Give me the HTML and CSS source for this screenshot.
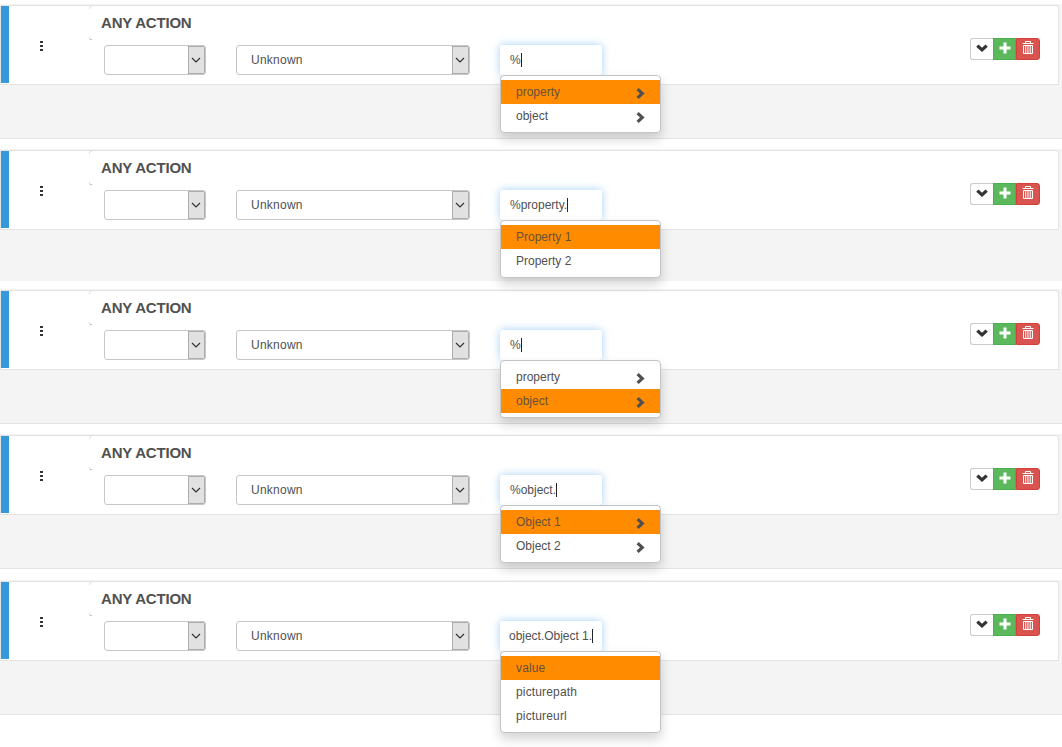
FILE: index.html
```
<!DOCTYPE html>
<html lang="en">
<head>
<meta charset="utf-8">
<title>Any Action</title>
<link rel="stylesheet" href="styles.css">
</head>
<body>
<svg width="0" height="0" class="defs">
  <symbol id="down" viewBox="0 0 12 8"><path d="M.2 2.700 2.500.4 6 3.800 9.500.4l2.300 2.300L6 8z"/></symbol>
  <symbol id="right" viewBox="0 0 9 11"><path d="M2.700 0 8.600 5.500l-5.900 5.500L.5 8.800 4 5.500.5 2.200z"/></symbol>
  <symbol id="plus" viewBox="0 0 12 12"><path d="M4.500 0.500h3v4h4v3h-4v4h-3v-4h-4v-3h4z"/></symbol>
  <symbol id="trash" viewBox="0 0 12 14"><path fill="none" stroke="currentColor" d="M.5 2.500h11M3.500 2V.5h5V2M1.500 4.500v8h9v-8z"/><path fill="none" stroke="currentColor" stroke-width=".8" d="M3.500 5v7M5.200 5v7M6.900 5v7M8.600 5v7"/></symbol>
  <symbol id="thin" viewBox="0 0 10 6"><path fill="none" stroke="currentColor" stroke-width="1.200" d="M1 1l4 3.900L9 1"/></symbol>
</svg>
<main id="list"></main>
<script src="app.js"></script>
</body>
</html>
```
FILE: styles.css
```
* { box-sizing: border-box; }
body { margin: 0; padding-top: 4px; height: 747px; overflow: hidden; background: #fff; font: 12px/24px "Liberation Sans", Arial, sans-serif; color: #505050; }
.defs { position: absolute; }
svg { display: block; fill: currentColor; }
.section { height: 135px; margin-bottom: 10px; padding-top: 1px; background: #f4f4f4; border-bottom: 1px solid #e3e3e3; }
.section.cut { height: 132px; margin-bottom: 8px; border-bottom: 0; }
.section.wide { margin-bottom: 11px; }
.card { position: relative; display: flex; width: 1059px; height: 80px; background: #fff; border: 1px solid #e3e3e3; border-radius: 0 3px 0 0; }
.bar { width: 8px; height: 77px; background: #3598db; }
.grip { width: 80px; display: flex; flex-direction: column; gap: 2px; padding: 35px 0 0 31px; }
.grip i { width: 3px; height: 2px; background: #333; }
.body { flex: 1; padding: 7px 0 0 12px; }
.title { margin: 0; height: 20px; font-size: 15px; line-height: 19px; font-weight: bold; letter-spacing: -.2px; }
.fields { display: flex; padding: 12px 0 0 3px; }
.select { display: flex; height: 30px; border: 1px solid #c6c6c6; border-radius: 3px; overflow: hidden; }
.select span { flex: 1; padding-left: 14px; line-height: 28px; letter-spacing: .25px; }
.select b { width: 17px; display: flex; align-items: center; justify-content: center; padding-right: 1px; background: #e1e1e1; border: 1px solid #adadad; }
.select svg { width: 10px; height: 6px; color: #333; }
.action { width: 102px; margin-right: 30px; }
.kind { width: 234px; margin-right: 30px; }
.entry { position: relative; width: 102px; height: 30px; }
.input { height: 30px; padding: 1px 10px; line-height: 28px; border-radius: 3px; box-shadow: 0 0 8px rgba(102,175,233,.6); background: #fff; display: flex; align-items: center; white-space: nowrap; }
.input.end { padding-left: 9px; letter-spacing: -.02px; }
.caret { width: 1px; height: 14px; background: #222; flex: none; }
.menu { position: absolute; z-index: 2; left: 0; top: 30px; width: 161px; margin: 0; padding: 4px 0; list-style: none; background: #fff; border: 1px solid #c2c4c6; border-radius: 4px; box-shadow: 0 6px 12px rgba(0,0,0,.175); }
.menu li { display: flex; justify-content: space-between; align-items: center; height: 24px; padding: 0 15px 0 15px; }
.menu .on { background: #ff8c00; color: #69503a; }
.menu .loose { letter-spacing: .15px; }
.menu svg { width: 9px; height: 11px; margin-top: 2px; color: #505050; }
.buttons { display: flex; width: 70px; height: 22px; margin: 32px 18px 0 0; }
.buttons span { display: flex; justify-content: center; width: 23px; padding-top: 5px; border: 1px solid #ccc; }
.buttons .more { border-radius: 3px 0 0 3px; border-right: 0; color: #333; padding-right: 1px; }
.buttons .add { background: #5cb85c; border-color: #4cae4c; color: #fff; padding: 3px 0 0; }
.buttons .del { width: 24px; background: #d9534f; border-color: #d43f3a; border-radius: 0 3px 3px 0; color: #fff; padding-top: 2px; }
.more svg { width: 12px; height: 8px; }
.add svg { width: 12px; height: 12px; }
.del svg { width: 12px; height: 14px; }
.corners { position: absolute; left: 88px; top: 0; width: 3px; height: 34px; }
.corners::before, .corners::after { content: ""; position: absolute; left: 0; width: 2px; height: 2px; border-left: 1px solid #ddd; }
.corners::before { top: 0; border-top: 1px solid #e6e6e6; border-radius: 2px 0 0 0; }
.corners::after { bottom: 0; border-bottom: 1px solid #bbb; border-radius: 0 0 0 2px; }
```
FILE: app.js
```
const rows = [
  { value: "%", items: ["property", "object"], on: 0, arrows: true },
  { value: "%property.", items: ["Property 1", "Property 2"], on: 0, cls: "cut" },
  { value: "%", items: ["property", "object"], on: 1, arrows: true },
  { value: "%object.", items: ["Object 1", "Object 2"], on: 0, arrows: true, cls: "wide" },
  { value: "object.Object 1.", items: ["value", "picturepath", "pictureurl"], on: 0, end: true }
];
const icon = id => `<svg><use href="#${id}"/></svg>`;
document.getElementById("list").innerHTML = rows.map(r => `
<section class="section ${r.cls || ""}"><div class="card">
  <div class="bar"></div><div class="grip"><i></i><i></i><i></i></div><div class="corners"></div>
  <div class="body"><h2 class="title">ANY ACTION</h2>
    <div class="fields">
      <div class="select action"><span></span><b>${icon("thin")}</b></div>
      <div class="select kind"><span>Unknown</span><b>${icon("thin")}</b></div>
      <div class="entry"><div class="input ${r.end ? "end" : ""}"><span>${r.value}</span><i class="caret"></i></div>
        <ul class="menu">${r.items.map((t, i) => `<li class="${i === r.on ? "on" : ""} ${r.end ? "loose" : ""}"><span>${t}</span>${r.arrows ? icon("right") : ""}</li>`).join("")}</ul>
      </div>
    </div>
  </div>
  <div class="buttons"><span class="more">${icon("down")}</span><span class="add">${icon("plus")}</span><span class="del">${icon("trash")}</span></div>
</div></section>`).join("");
```
